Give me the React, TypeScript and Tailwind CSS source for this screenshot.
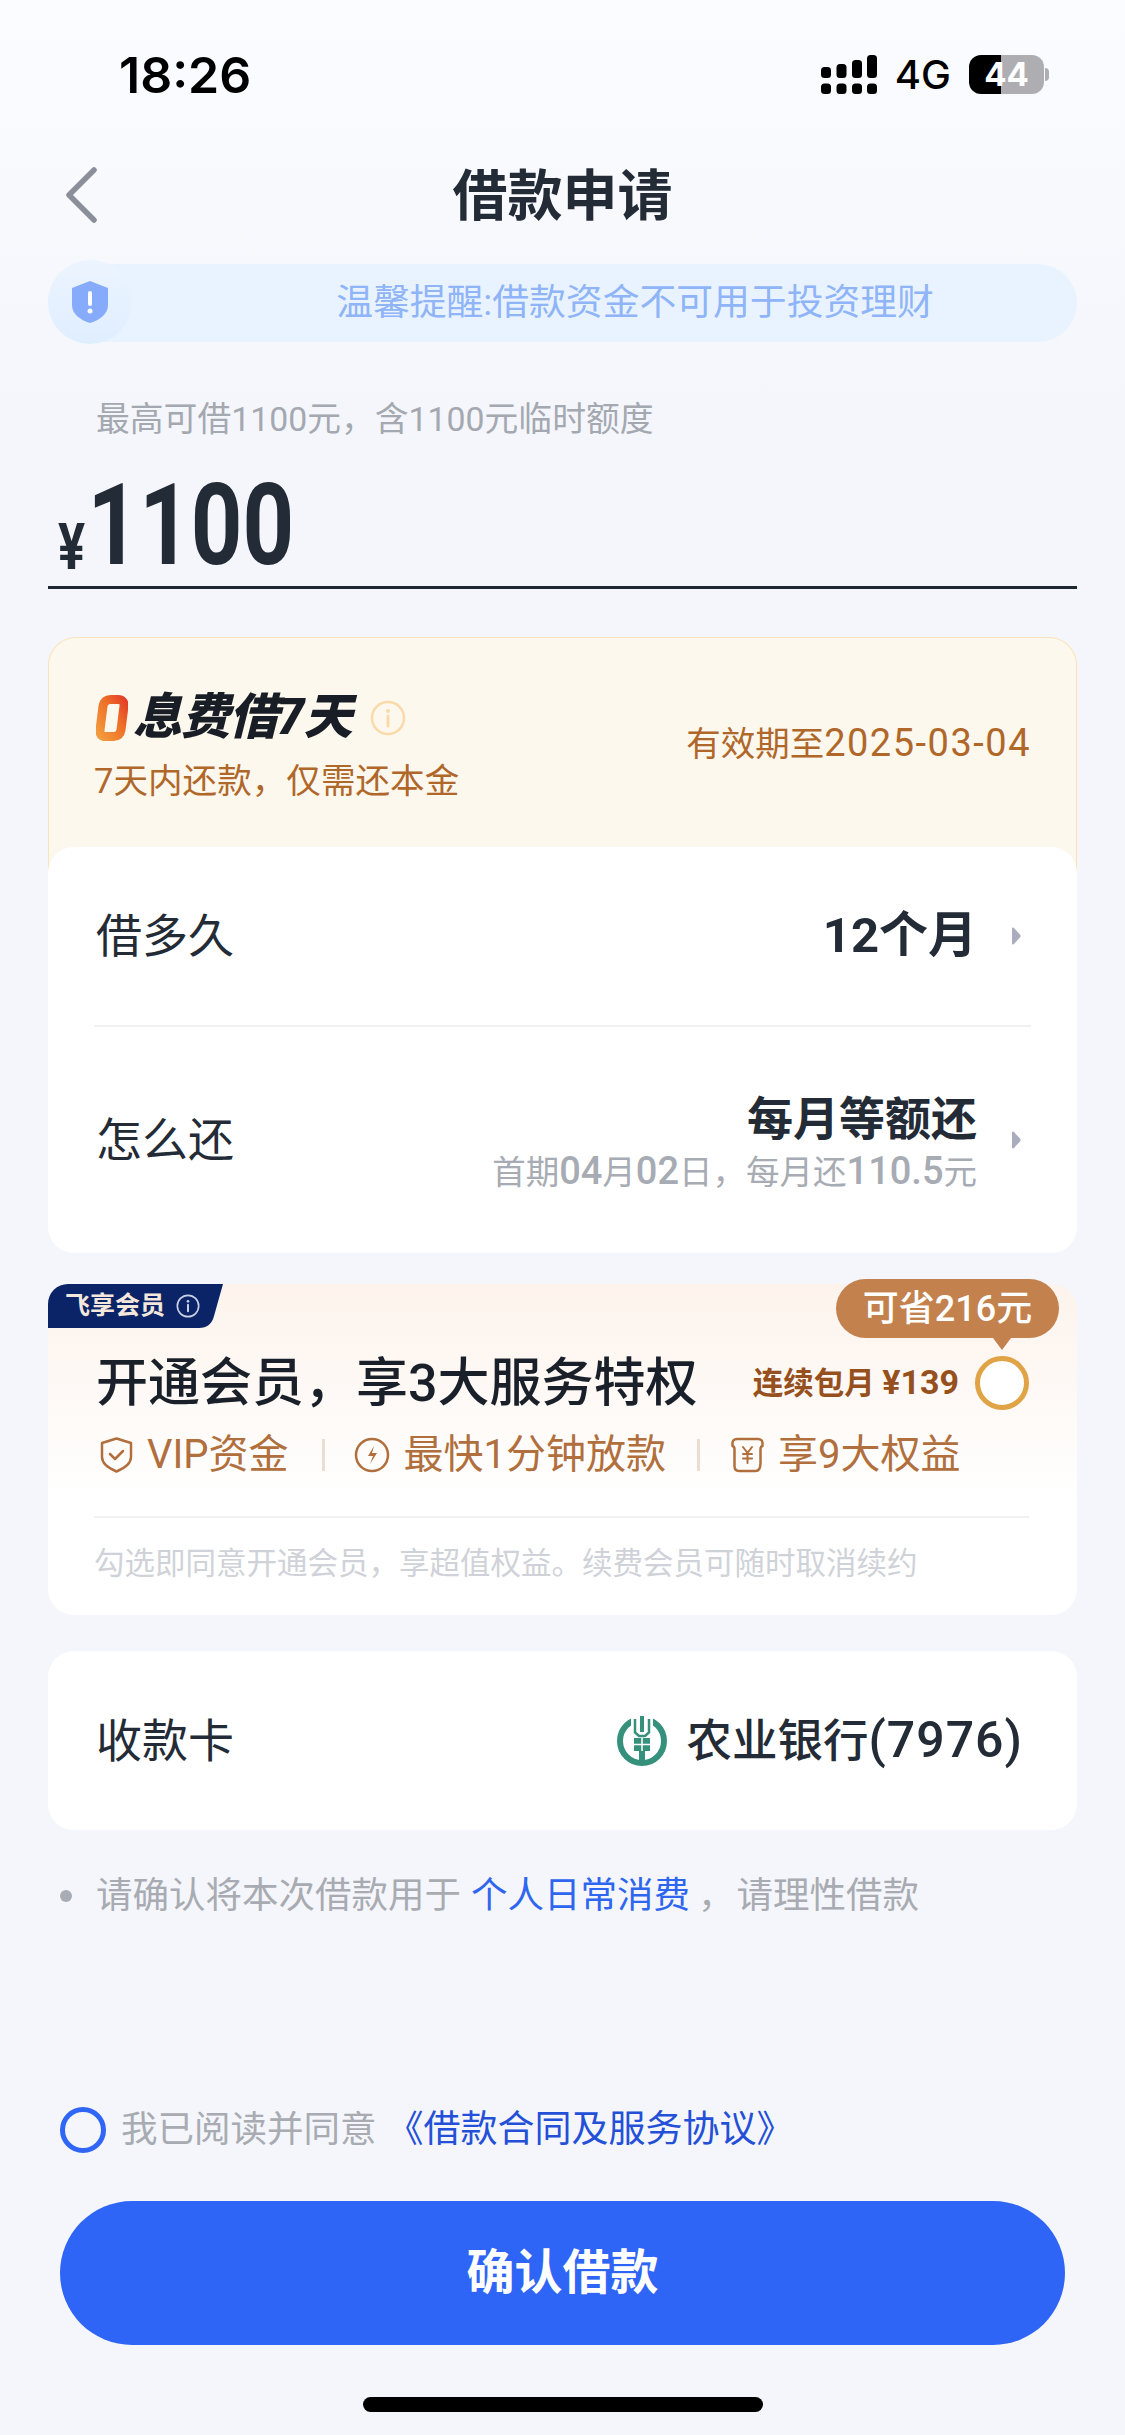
import type { ReactNode } from 'react'

// status bar glyphs
function SignalBars() {
  const cols = [
    { x: 0, top: 12 },
    { x: 15.5, top: 9 },
    { x: 31, top: 5 },
    { x: 46, top: 0 },
  ]
  return (
    <svg width="56" height="39" viewBox="0 0 56 39" fill="#000">
      {cols.map((c) => (
        <g key={c.x}>
          <rect x={c.x} y={c.top} width="10" height={23 - c.top} rx="3.5" />
          <rect x={c.x} y="28.5" width="10" height="10.5" rx="3.5" />
        </g>
      ))}
    </svg>
  )
}

function ZeroMark() {
  return (
    <svg width="32" height="46" viewBox="0 0 32 46" fill="none">
      <defs>
        <linearGradient id="zero" x1="0" y1="1" x2="1" y2="0">
          <stop offset="0" stopColor="#f39a3d" />
          <stop offset="0.6" stopColor="#ee6f27" />
          <stop offset="1" stopColor="#e4412a" />
        </linearGradient>
      </defs>
      <path
        d="M14 4.500h8c4 0 6.500 2.500 6 6.500l-3 24c-.5 4-3.500 6.500-7.500 6.500h-8c-4 0-6-2.500-5.500-6.500l3-24c.5-4 3.500-6.500 7.500-6.500z"
        stroke="url(#zero)"
        strokeWidth="9"
      />
    </svg>
  )
}

function InfoCircle({ size, color }: { size: number; color: string }) {
  return (
    <svg width={size} height={size} viewBox="0 0 36 36" fill="none">
      <circle cx="18" cy="18" r="16" stroke={color} strokeWidth="2.500" />
      <circle cx="18" cy="11" r="2" fill={color} />
      <path d="M18 16v10" stroke={color} strokeWidth="3" strokeLinecap="round" />
    </svg>
  )
}

function BankLogo() {
  return (
    <svg width="50" height="50" viewBox="0 0 50 50" fill="none">
      <circle cx="25" cy="25" r="22" stroke="#35907c" strokeWidth="6" />
      <rect x="14" y="0" width="22" height="21" fill="#fff" />
      <path d="M18 3v13.500l4 3.500h6l4-3.500V3" stroke="#35907c" strokeWidth="2.500" />
      <rect x="23" y="0" width="4" height="16" fill="#35907c" />
      <rect x="17" y="22" width="16" height="13" fill="#35907c" />
      <path d="M17 28.500h16M25 22v13" stroke="#fff" strokeWidth="1.500" />
      <rect x="22" y="35" width="6" height="12" fill="#35907c" />
    </svg>
  )
}

function Caret() {
  return (
    <svg width="10" height="18" viewBox="0 0 10 18" fill="#a9adbd">
      <path d="M1 1.500c0-1 1-1.300 1.700-.7l6.500 7c.5.600.5 1.800 0 2.400l-6.500 7c-.7.600-1.700.3-1.700-.7z" />
    </svg>
  )
}

function Perk({ icon, label }: { icon: ReactNode; label: string }) {
  return (
    <div className="flex items-center gap-[14px]">
      {icon}
      <span className="text-[40px] leading-[50px] text-[#b06f3c]">{label}</span>
    </div>
  )
}

export default function App() {
  return (
    <div className="flex h-[2435px] w-[1125px] flex-col overflow-hidden bg-[linear-gradient(180deg,#fbfcff_0%,#f4f6fb_420px)] font-['Roboto','Noto_Sans_CJK_SC',sans-serif] text-[#232b36]">
      {/* status bar */}
      <div className="flex h-[150px] items-start justify-between pt-[50px] pr-[76px] pl-[119px] text-black">
        <span className="font-['Inter'] text-[50px] leading-[50px] font-semibold">18:26</span>
        <div className="mt-[5px] flex items-center">
          <SignalBars />
          <span className="ml-[18px] font-['Inter'] text-[40px] leading-[39px] font-medium">4G</span>
          <div className="ml-[18px] flex h-[39px] w-[75px] items-center justify-center rounded-[12px] bg-[linear-gradient(90deg,#000_43%,#aeaeb2_43%)] font-['Inter'] text-[33px] font-bold text-white">
            44
          </div>
          <div className="ml-[1px] h-[13px] w-[4px] rounded-r-full bg-[#aeaeb2]" />
        </div>
      </div>

      {/* nav */}
      <div className="grid h-[90px] grid-cols-[1fr_auto_1fr] items-center pl-[64px]">
        <svg width="36" height="56" viewBox="0 0 36 56" fill="none">
          <path d="M30 3 5 28l25 25" stroke="#8b8f99" strokeWidth="5.500" strokeLinecap="round" strokeLinejoin="round" />
        </svg>
        <h1 className="-ml-[64px] pt-[2px] text-[55px] leading-[70px] font-bold">借款申请</h1>
        <div />
      </div>

      {/* notice */}
      <div className="relative mx-[48px] mt-[24px] flex h-[78px] items-center justify-center rounded-full bg-[#e9f3ff] pl-[145px] text-[36.800px] text-[#8fb4f8]">
        <div className="absolute -top-[4px] left-0 flex h-[84px] w-[84px] items-center justify-center rounded-full bg-[linear-gradient(180deg,#ecf4ff,#dfeeff)]">
          <svg width="36" height="42" viewBox="0 0 36 42">
            <path d="M18 0 36 7v17c0 9-8 15-18 18C8 39 0 33 0 24V7z" fill="#86abfa" />
            <rect x="16" y="10" width="4" height="15" rx="2" fill="#fff" />
            <circle cx="18" cy="30" r="2.500" fill="#fff" />
          </svg>
        </div>
        温馨提醒:借款资金不可用于投资理财
      </div>

      {/* amount */}
      <p className="mt-[55px] pl-[96px] text-[33.800px] leading-[46px] text-[#a4a8b0]">最高可借1100元，含1100元临时额度</p>
      <div className="mx-[48px] flex h-[146px] border-b-[3px] border-[#1f2733] pl-[10px]">
        <div className="flex origin-left scale-x-[0.79] items-end font-bold">
          <span className="pb-[6px] text-[64px] leading-[64px]">¥</span>
          <span className="ml-[3px] pb-[4px] text-[114px] leading-[114px]">1100</span>
        </div>
      </div>

      {/* interest free card */}
      <div className="mx-[48px] mt-[48px] flex h-[238px] justify-between rounded-t-[28px] border border-b-0 border-[#fae3b8] bg-[#fdf8ee] px-[45px] pt-[54px]">
        <div>
          <div className="flex items-center">
            <span className="ml-[2px]">
              <ZeroMark />
            </span>
            <span className="ml-[5px] text-[49px] leading-[52px] font-black tracking-[-1px] text-[#181d26] italic">息费借7天</span>
            <span className="ml-[18px]">
              <InfoCircle size={36} color="#fbd9a9" />
            </span>
          </div>
          <p className="mt-[15px] text-[34.600px] leading-[44px] text-[#b0672a]">7天内还款，仅需还本金</p>
        </div>
        <p className="mt-[29px] text-[34.500px] leading-[44px] text-[#b0672a]">
          有效期至<span className="text-[38px] tracking-[1.5px]">2025-03-04</span>
        </p>
      </div>

      {/* term + repayment */}
      <div className="relative mx-[48px] -mt-[28px] rounded-[26px] bg-white pr-[46px] pl-[48px]">
        <div className="flex h-[178px] items-center justify-between">
          <span className="text-[46px] leading-[60px]">借多久</span>
          <div className="flex items-center gap-[34px] pr-[10px]">
            <span className="text-[49px] leading-[60px] font-bold">12个月</span>
            <Caret />
          </div>
        </div>
        <div className="-ml-[2px] h-[2px] bg-[#f0f1f3]" />
        <div className="flex h-[226px] items-center justify-between">
          <span className="text-[46px] leading-[60px]">怎么还</span>
          <div className="flex items-center gap-[34px] pr-[10px]">
            <div className="pt-[4px] text-right">
              <p className="text-[46px] leading-[60px] font-bold">每月等额还</p>
              <p className="text-[33.500px] leading-[44px] text-[#a7abb3]">
                首期<span className="text-[38px] font-medium">04</span>月<span className="text-[38px] font-medium">02</span>日，每月还<span className="text-[38px] font-medium">110.5</span>元
              </p>
            </div>
            <Caret />
          </div>
        </div>
      </div>

      {/* membership */}
      <div className="relative mx-[48px] mt-[31px] h-[331px] rounded-[26px] bg-[linear-gradient(180deg,#fdf3ec_0%,#ffffff_65%)] pr-[48px] pl-[46px]">
        <div className="absolute top-0 left-0 flex h-[44px] w-[175px] items-center pl-[17px]">
          <svg className="absolute inset-0" width="175" height="44" viewBox="0 0 175 44">
            <path d="M0 44V20A20 20 0 0 1 20 0h155l-9 32q-3 12-15 12z" fill="#0b2468" />
          </svg>
          <span className="relative text-[25px] leading-[30px] font-bold text-[#f4e8dc]">飞享会员</span>
          <span className="relative ml-[11px]">
            <InfoCircle size={24} color="#c9d0e4" />
          </span>
        </div>

        <div className="absolute -top-[5px] right-[18px] flex h-[59px] w-[223px] items-center justify-center rounded-[30px] bg-[#c3814e] text-[36px] font-medium text-white">
          可省216元
          <div className="absolute top-full left-[157px] h-0 w-0 border-x-[9px] border-t-[12px] border-x-transparent border-t-[#c3814e]" />
        </div>

        <div className="flex h-[146px] items-end justify-between pb-[16px]">
          <span className="pl-[2px] text-[52px] leading-[60px] font-medium text-[#1a2029]">开通会员，享3大服务特权</span>
          <div className="mb-[4px] flex items-center gap-[16px]">
            <span className="text-[30.500px] leading-[40px] font-bold text-[#96501d]">
              连续包月 <span className="text-[34px]">¥139</span>
            </span>
            <div className="h-[54px] w-[54px] rounded-full border-[5px] border-[#e0a345] bg-white" />
          </div>
        </div>

        <div className="flex h-[50px] items-center pl-[6px]">
          <Perk
            label="VIP资金"
            icon={
              <svg width="33" height="36" viewBox="0 0 33 36" fill="none" stroke="#b06f3c" strokeWidth="2.500" strokeLinejoin="round" strokeLinecap="round">
                <path d="M16.500 1.500 31 6v14c0 7-6 11-14.500 14.500C8 31 2 27 2 20V6z" />
                <path d="m10 17 5 5 8-8" />
              </svg>
            }
          />
          <div className="mr-[29px] ml-[33px] h-[32px] w-[3px] bg-[#ecddd0]" />
          <Perk
            label="最快1分钟放款"
            icon={
              <svg width="36" height="36" viewBox="0 0 36 36" fill="none">
                <circle cx="18" cy="18" r="16" stroke="#b06f3c" strokeWidth="2.500" />
                <path d="M20 9l-6 10h5l-3 8 7-11h-5z" fill="#b06f3c" />
              </svg>
            }
          />
          <div className="mr-[31px] ml-[31px] h-[32px] w-[3px] bg-[#ecddd0]" />
          <Perk
            label="享9大权益"
            icon={
              <svg width="33" height="36" viewBox="0 0 33 36" fill="none" stroke="#b06f3c" strokeWidth="2.500" strokeLinejoin="round" strokeLinecap="round">
                <path d="M6 2h21c3 0 4.500 2 4.500 4v3c-2 .5-2 2-2 3v14c0 5-2 8-5 8H8c-3 0-4.500-2-4.500-5V12c0-1 0-2.500-2-3V6c0-2 1.500-4 4.500-4z" />
                <path d="m12 10 4.500 6 4.500-6M16.500 16v10M12 17h9M12 21.500h9" strokeWidth="2" />
              </svg>
            }
          />
        </div>

        <div className="mt-[36px] h-[2px] bg-[#f0f1f3]" />
        <p className="mt-[26px] text-[30.500px] leading-[40px] text-[#cfd2d8]">勾选即同意开通会员，享超值权益。续费会员可随时取消续约</p>
      </div>

      {/* bank card */}
      <div className="mx-[48px] mt-[36px] flex h-[179px] items-center justify-between rounded-[26px] bg-white pr-[54px] pl-[48px]">
        <span className="text-[46px] leading-[60px]">收款卡</span>
        <div className="flex items-center gap-[20px]">
          <BankLogo />
          <span className="text-[45.500px] leading-[60px] font-medium">
            农业银行<span className="text-[50px] tracking-[1px]">(7976)</span>
          </span>
        </div>
      </div>

      {/* note */}
      <div className="mt-[41px] flex h-[50px] items-center pl-[60px] text-[36.500px] text-[#a8abb1]">
        <div className="mr-[24px] h-[12px] w-[12px] rounded-full bg-[#a9adb3]" />
        <span>请确认将本次借款用于</span>
        <span className="ml-[10px] text-[#2f66f0]">个人日常消费</span>
        <span className="ml-[8px]">，</span>
        <span className="ml-[2px]">请理性借款</span>
      </div>

      {/* agreement */}
      <div className="mx-[60px] mt-[186px] flex h-[46px] items-center text-[36.500px]">
        <div className="h-[46px] w-[46px] rounded-full border-[5px] border-[#2f66f6]" />
        <span className="ml-[15px] text-[#a8abb1]">我已阅读并同意</span>
        <span className="ml-[10px] text-[37px] text-[#2450d8]">《借款合同及服务协议》</span>
      </div>

      {/* submit */}
      <button className="mx-[60px] mt-[48px] h-[144px] rounded-full bg-[#2f65f6] text-[48px] font-bold text-white">确认借款</button>

      <div className="mx-auto mt-[52px] h-[15px] w-[400px] rounded-full bg-black" />
    </div>
  )
}
